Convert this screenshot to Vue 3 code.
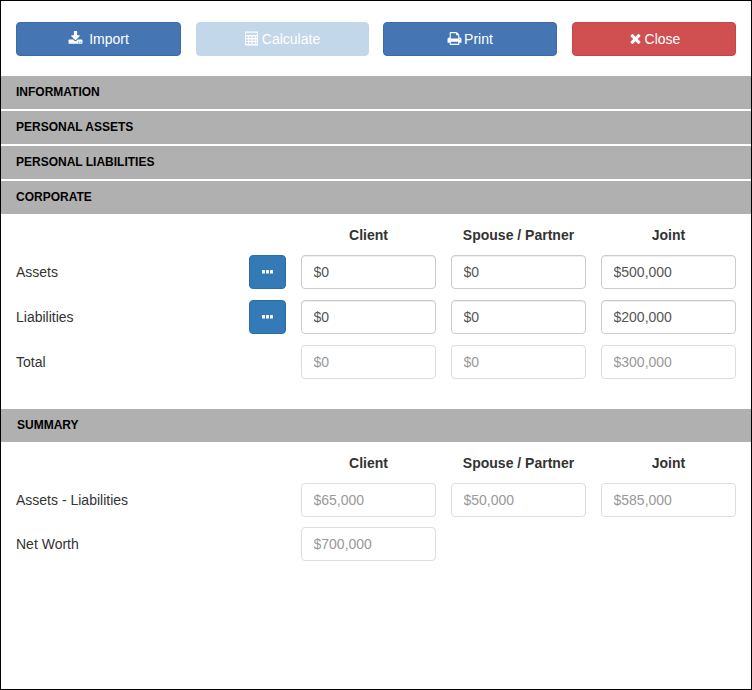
<script setup>
const toolbar = [
  { label: 'Import', icon: 'download', cls: 'btn-import' },
  { label: 'Calculate', icon: 'calc', cls: 'btn-calc' },
  { label: 'Print', icon: 'print', cls: 'btn-print' },
  { label: 'Close', icon: 'times', cls: 'btn-close' },
]
const paths = {
  download: 'M1344 1344q0-26-19-45t-45-19-45 19-19 45 19 45 45 19 45-19 19-45zm256 0q0-26-19-45t-45-19-45 19-19 45 19 45 45 19 45-19 19-45zm128-224v320q0 40-28 68t-68 28h-1472q-40 0-68-28t-28-68v-320q0-40 28-68t68-28h465l135 136q58 56 136 56t136-56l136-136h464q40 0 68 28t28 68zm-325-569q17 41-14 70l-448 448q-18 19-45 19t-45-19l-448-448q-31-29-14-70 17-39 59-39h256v-448q0-26 19-45t45-19h256q26 0 45 19t19 45v448h256q42 0 59 39z',
  print: 'M448 1536h896v-256h-896v256zm0-640h896v-384h-160q-40 0-68-28t-28-68v-160h-640v640zm1152 64q0-26-19-45t-45-19-45 19-19 45 19 45 45 19 45-19 19-45zm128 0v416q0 13-9.5 22.5t-22.5 9.5h-224v160q0 40-28 68t-68 28h-960q-40 0-68-28t-28-68v-160h-224q-13 0-22.5-9.5t-9.5-22.5v-416q0-79 56.5-135.5t135.5-56.5h64v-544q0-40 28-68t68-28h672q40 0 88 20t76 48l152 152q28 28 48 76t20 88v256h64q79 0 135.5 56.5t56.5 135.5z',
  times: 'M1490 1322q0 40-28 68l-136 136q-28 28-68 28t-68-28l-294-294-294 294q-28 28-68 28t-68-28l-136-136q-28-28-28-68t28-68l294-294-294-294q-28-28-28-68t28-68l136-136q28-28 68-28t68 28l294 294 294-294q28-28 68-28t68 28l136 136q28 28 28 68t-28 68l-294 294 294 294q28 28 28 68z',
  calc: 'M64 64h1408q64 0 64 64v1536q0 64-64 64h-1408q-64 0-64-64v-1536q0-64 64-64zM128 208v272h1280v-272zM128 624v224h256v-224zM512 624v224h256v-224zM896 624v224h256v-224zM1280 624v224h128v-224zM128 976v224h256v-224zM512 976v224h256v-224zM896 976v224h256v-224zM1280 976v224h128v-224zM128 1328v224h256v-224zM512 1328v224h256v-224zM896 1328v224h256v-224zM1280 1328v224h128v-224z',
}
const sections = ['INFORMATION', 'PERSONAL ASSETS', 'PERSONAL LIABILITIES', 'CORPORATE']
const columns = ['Client', 'Spouse / Partner', 'Joint']
const corporate = [
  { label: 'Assets', more: true, values: ['$0', '$0', '$500,000'] },
  { label: 'Liabilities', more: true, values: ['$0', '$0', '$200,000'] },
  { label: 'Total', more: false, values: ['$0', '$0', '$300,000'] },
]
const summary = [
  { label: 'Assets - Liabilities', values: ['$65,000', '$50,000', '$585,000'] },
  { label: 'Net Worth', values: ['$700,000'] },
]
</script>

<template>
  <div class="page">
    <div class="toolbar">
      <button
        v-for="b in toolbar"
        :key="b.label"
        type="button"
        class="btn"
        :class="b.cls"
      >
        <svg class="icon" viewBox="0 0 1792 1792" aria-hidden="true">
          <path :d="paths[b.icon]" fill="#fff" fill-rule="evenodd" />
        </svg>
        <span>{{ b.label }}</span>
      </button>
    </div>

    <div class="bars">
      <div v-for="s in sections" :key="s" class="bar">{{ s }}</div>
    </div>

    <div class="grid grid-corporate">
      <div
        v-for="(c, i) in columns"
        :key="c"
        class="col-head"
        :class="{ first: i === 0 }"
      >{{ c }}</div>
      <template v-for="row in corporate" :key="row.label">
        <div class="label">{{ row.label }}</div>
        <button v-if="row.more" type="button" class="more" aria-label="More">
          <svg width="11" height="4" viewBox="0 0 11 4" aria-hidden="true">
            <rect x="0" y="0" width="3" height="3.4" rx="0.5" fill="#fff" />
            <rect x="4" y="0" width="3" height="3.4" rx="0.5" fill="#fff" />
            <rect x="8" y="0" width="3" height="3.4" rx="0.5" fill="#fff" />
          </svg>
        </button>
        <div v-else></div>
        <input
          v-for="(v, i) in row.values"
          :key="i"
          class="field"
          :value="v"
          :disabled="!row.more"
        />
      </template>
    </div>

    <div class="bar bar-summary">SUMMARY</div>

    <div class="grid grid-summary">
      <div
        v-for="(c, i) in columns"
        :key="c"
        class="col-head"
        :class="{ first: i === 0 }"
      >{{ c }}</div>
      <template v-for="row in summary" :key="row.label">
        <div class="label wide">{{ row.label }}</div>
        <input
          v-for="(v, i) in row.values"
          :key="i"
          class="field"
          :value="v"
          disabled
        />
      </template>
    </div>
  </div>
</template>

<style>
html, body { margin: 0; background: #fff; }
</style>

<style scoped>
.page {
  box-sizing: border-box;
  width: 752px;
  height: 690px;
  border: 1px solid #000;
  background: #fff;
  font-family: "Liberation Sans", Arial, sans-serif;
  font-size: 14px;
  color: #333;
  overflow: hidden;
}
.toolbar {
  display: flex;
  padding: 21px 15px 20px;
}
.btn {
  box-sizing: border-box;
  height: 34px;
  display: inline-flex;
  align-items: center;
  justify-content: center;
  gap: 2px;
  padding: 0;
  border: 1px solid;
  border-radius: 4px;
  color: #fff;
  font: inherit;
}
.btn-import { width: 165px; gap: 6px; background: #4576b3; border-color: #3b6ba8; }
.btn-calc { width: 173px; margin-left: 15px; background: #c3d7ea; border-color: #c3d7ea; }
.btn-print { width: 174px; margin-left: 14px; background: #4576b3; border-color: #3b6ba8; }
.btn-close { width: 164px; margin-left: 15px; background: #d05052; border-color: #c9434a; }
.icon { width: 15px; height: 15px; flex: none; margin-bottom: 2px; }
.bars { display: flex; flex-direction: column; gap: 2px; }
.bar {
  height: 33px;
  line-height: 33px;
  padding-left: 15px;
  background: #b0b0b0;
  color: #000;
  font-size: 12px;
  font-weight: 700;
}
.bar-summary { margin-top: 29px; padding-left: 16px; }
.grid {
  display: grid;
  grid-template-columns: 218px 37px 135px 135px 135px;
  column-gap: 15px;
  padding-left: 15px;
  align-items: center;
}
.grid-corporate { padding-top: 11px; row-gap: 10px; }
.grid-corporate .field,
.grid-corporate .more,
.grid-corporate .label { margin-bottom: 1px; }
.grid-summary { padding-top: 11px; row-gap: 10px; }
.col-head {
  height: 20px;
  line-height: 20px;
  text-align: center;
  font-weight: 700;
  color: #333;
}
.col-head.first { grid-column: 3; }
.label { color: #333; }
.label.wide { grid-column: 1 / span 2; }
.more {
  box-sizing: border-box;
  width: 37px;
  height: 34px;
  display: flex;
  align-items: center;
  justify-content: center;
  padding: 0;
  background: #337ab7;
  border: 1px solid #2e6da4;
  border-radius: 4px;
}
.field {
  box-sizing: border-box;
  width: 135px;
  height: 34px;
  padding: 6px 11.5px;
  background: #fff;
  border: 1px solid #ccc;
  border-radius: 4px;
  box-shadow: inset 0 1px 1px rgba(0, 0, 0, 0.075);
  color: #555;
  font: inherit;
}
.field:disabled {
  border-color: #ddd;
  box-shadow: none;
  color: #999;
  opacity: 1;
}
</style>
